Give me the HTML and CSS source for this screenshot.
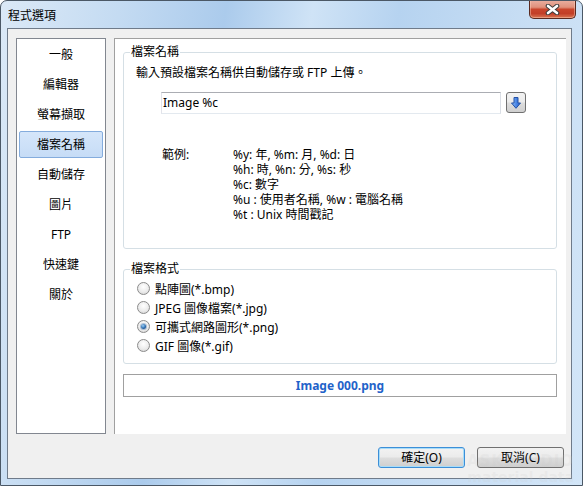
FILE: index.html
```html
<!DOCTYPE html>
<html lang="zh-Hant">
<head>
<meta charset="utf-8">
<title>程式選項</title>
<link rel="stylesheet" href="styles.css">
</head>
<body>
<div class="window">
  <div class="titlebar">
    <span class="title">程式選項</span>
    <div class="close">
      <svg width="15" height="11" viewBox="0 0 15 11">
        <path d="M3 2 L12 9 M12 2 L3 9" stroke="#3c3c3c" stroke-width="4.6" stroke-linecap="round" fill="none"/>
        <path d="M3 2 L12 9 M12 2 L3 9" stroke="#ffffff" stroke-width="2.6" stroke-linecap="round" fill="none"/>
      </svg>
    </div>
  </div>
  <div class="client">
    <div class="main">
      <ul class="nav">
        <li>一般</li>
        <li>編輯器</li>
        <li>螢幕擷取</li>
        <li class="selected">檔案名稱</li>
        <li>自動儲存</li>
        <li>圖片</li>
        <li>FTP</li>
        <li>快速鍵</li>
        <li>關於</li>
      </ul>
      <div class="page">
        <fieldset class="group g1">
          <legend>檔案名稱</legend>
          <p class="desc">輸入預設檔案名稱供自動儲存或 FTP 上傳。</p>
          <div class="input-row">
            <div class="input">Image %c</div>
            <div class="arrow-btn">
              <svg width="10" height="12" viewBox="0 0 10 12">
                <defs>
                  <linearGradient id="ag" x1="0" y1="0" x2="1" y2="0">
                    <stop offset="0" stop-color="#9cc4f7"/>
                    <stop offset="0.5" stop-color="#4c88e6"/>
                    <stop offset="1" stop-color="#2a5fc8"/>
                  </linearGradient>
                </defs>
                <path d="M3 0.5 H7 V6 H9.5 L5 11.3 L0.5 6 H3 Z" fill="url(#ag)" stroke="#2350a6" stroke-width="1" stroke-linejoin="round"/>
              </svg>
            </div>
          </div>
          <div class="examples">
            <div class="ex-label">範例:</div>
            <div class="ex-list">
              <div>%y: 年, %m: 月, %d: 日</div>
              <div>%h: 時, %n: 分, %s: 秒</div>
              <div>%c: 數字</div>
              <div>%u : 使用者名稱, %w : 電腦名稱</div>
              <div>%t : Unix 時間戳記</div>
            </div>
          </div>
        </fieldset>
        <fieldset class="group g2">
          <legend>檔案格式</legend>
          <div class="radio-row"><span class="radio"></span><span>點陣圖(*.bmp)</span></div>
          <div class="radio-row"><span class="radio"></span><span>JPEG 圖像檔案(*.jpg)</span></div>
          <div class="radio-row"><span class="radio checked"></span><span>可攜式網路圖形(*.png)</span></div>
          <div class="radio-row"><span class="radio"></span><span>GIF 圖像(*.gif)</span></div>
        </fieldset>
        <div class="preview">Image 000.png</div>
      </div>
    </div>
    <div class="footer">
      <button class="btn default">確定(O)</button>
      <button class="btn">取消(C)</button>
    </div>
  </div>
  <div class="watermark"><span class="wm1">ASKSTUDIO</span><span class="wm2">material data</span></div>
</div>
</body>
</html>
```

FILE: styles.css
```css
html, body {
  margin: 0;
  padding: 0;
  background: #ffffff;
}

body {
  font-family: "Noto Sans", "Noto Sans CJK TC", sans-serif;
  font-size: 12px;
  color: #000;
}

.window {
  position: relative;
  width: 583px;
  height: 486px;
  box-sizing: border-box;
  border: 1px solid #4b5866;
  border-radius: 7px 7px 0 0;
  background: linear-gradient(100deg, #dbe9f7 0%, #c4dbf2 18%, #abcbec 34%, #cfe3f6 47%, #b6d3f0 60%, #c8def4 80%, #d3e6f8 100%);
  display: flex;
  flex-direction: column;
  padding: 0 10px 6px 6px;
  overflow: hidden;
}

.titlebar {
  height: 27px;
  flex: none;
  display: flex;
  justify-content: space-between;
  align-items: flex-start;
  margin: 0 -10px 0 -6px;
  padding: 0 6px 0 7px;
}

.title {
  padding-top: 8px;
  line-height: 14px;
  color: #000;
}

.close {
  width: 47px;
  height: 19px;
  margin-top: -1px;
  box-sizing: border-box;
  border: 1px solid #5a2a20;
  border-top: none;
  border-radius: 0 0 5px 5px;
  background: linear-gradient(#eab0a2 0%, #e0917c 40%, #c9452c 52%, #c23f28 75%, #d97552 100%);
  box-shadow: inset 0 0 0 1px rgba(255, 210, 190, 0.45);
  display: flex;
  align-items: center;
  justify-content: center;
}

.client {
  flex: 1;
  display: flex;
  flex-direction: column;
  background: #f0f0f0;
  border: 1px solid #6f7b8a;
  padding: 9px 5px 0 8px;
}

.main {
  display: flex;
  gap: 8px;
  height: 396px;
  flex: none;
}

.nav {
  width: 90px;
  flex: none;
  box-sizing: border-box;
  margin: 0;
  padding: 2px 1px 0;
  list-style: none;
  background: #fff;
  border: 1px solid #828790;
}

.nav li {
  height: 27px;
  box-sizing: border-box;
  margin: 0 1px 3px;
  border: 1px solid transparent;
  border-radius: 2px;
  line-height: 25px;
  text-align: center;
}

.nav li.selected {
  background: linear-gradient(#d5e6fa, #c6dcf6);
  border-color: #84acdd;
}

.page {
  flex: 1;
  background: #fff;
  border-left: 1px solid #a0a0a0;
  border-top: 1px solid #a0a0a0;
  padding: 6px 9px 0 8px;
  display: flex;
  flex-direction: column;
}

.group {
  margin: 0;
  border: 1px solid #d5dfe5;
  border-radius: 3px;
  padding: 0 8px 0 7px;
  min-width: 0;
}

.group legend {
  padding: 0 1px;
  margin-left: -1px;
  line-height: 14px;
  color: #000;
}

.g1 {
  padding-bottom: 26px;
}

.desc {
  margin: 6px 0 0 5px;
  line-height: 16px;
}

.input-row {
  display: flex;
  gap: 5px;
  margin-top: 11px;
  padding-left: 30px;
  align-items: flex-start;
}

.input {
  width: 340px;
  height: 22px;
  box-sizing: border-box;
  border: 1px solid;
  border-color: #abadb3 #dbdfe6 #e3e9ef #e2e3ea;
  padding-left: 1px;
  line-height: 20px;
}

.arrow-btn {
  width: 20px;
  height: 21px;
  box-sizing: border-box;
  border: 1px solid #707070;
  border-radius: 3px;
  background: linear-gradient(#f2f2f2 0%, #ebebeb 48%, #dddddd 52%, #cfcfcf 100%);
  display: flex;
  align-items: center;
  justify-content: center;
}

.examples {
  display: flex;
  margin-top: 33px;
  padding-left: 31px;
  line-height: 15px;
}

.ex-label {
  width: 71px;
  flex: none;
}

.g2 {
  margin-top: 13px;
  padding-bottom: 8px;
}

.radio-row {
  display: flex;
  align-items: center;
  gap: 5px;
  height: 19px;
  padding-left: 6px;
}

.g2 legend + .radio-row {
  margin-top: 3px;
}

.radio {
  width: 13px;
  height: 13px;
  box-sizing: border-box;
  border-radius: 50%;
  border: 1px solid #8b8b8b;
  background: radial-gradient(circle at 50% 35%, #ffffff 0%, #ececec 55%, #cfcfcf 100%);
  display: flex;
  align-items: center;
  justify-content: center;
  flex: none;
}

.radio.checked::after {
  content: "";
  width: 5px;
  height: 5px;
  border-radius: 50%;
  background: radial-gradient(circle at 40% 35%, #9fd0f5 0%, #2b6cb0 55%, #143a66 100%);
  box-shadow: 0 0 0 1px rgba(40, 90, 150, 0.35);
}

.preview {
  margin-top: 10px;
  height: 23px;
  box-sizing: border-box;
  border: 1px solid #a0a0a0;
  text-align: center;
  line-height: 21px;
  font-weight: bold;
  color: #1f63c9;
}

.footer {
  display: flex;
  justify-content: flex-end;
  gap: 12px;
  padding-top: 13px;
  padding-right: 2px;
}

.btn {
  width: 87px;
  height: 21px;
  box-sizing: border-box;
  border: 1px solid #707070;
  border-radius: 3px;
  background: linear-gradient(#f2f2f2 0%, #ebebeb 48%, #dddddd 52%, #cfcfcf 100%);
  font-family: "Noto Sans", "Noto Sans CJK TC", sans-serif;
  font-size: 12px;
  line-height: 17px;
  padding: 0;
  color: #000;
}

.btn.default {
  border-color: #3c8fd8;
  box-shadow: inset 0 0 0 1px #a8dcf8;
}

.watermark {
  position: absolute;
  right: 8px;
  bottom: 0;
  display: flex;
  flex-direction: column;
  align-items: flex-end;
  color: rgba(200, 200, 200, 0.18);
  font-family: "DejaVu Sans", sans-serif;
  pointer-events: none;
}

.wm1 {
  font-size: 15px;
  font-weight: bold;
  letter-spacing: 1px;
  line-height: 16px;
}

.wm2 {
  font-size: 14px;
  font-weight: bold;
  line-height: 16px;
}
```
